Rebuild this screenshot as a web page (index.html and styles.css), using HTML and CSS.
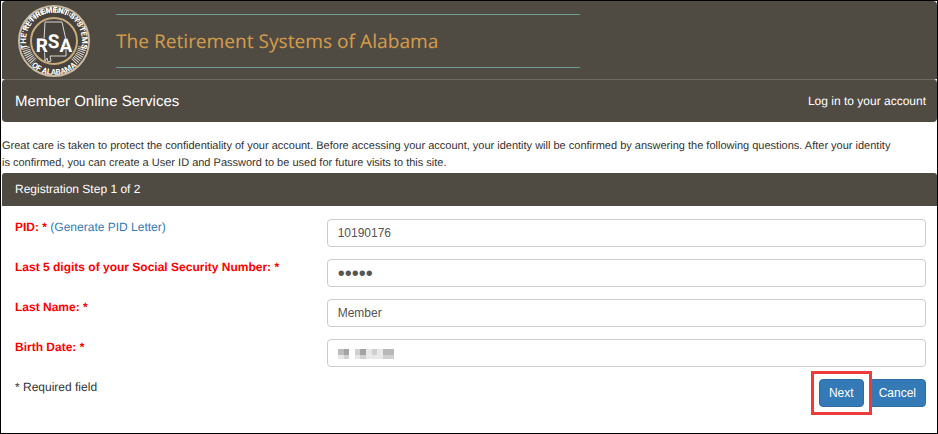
FILE: index.html
```html
<!DOCTYPE html>
<html lang="en">
<head>
  <meta charset="UTF-8">
  <title>Member Online Services</title>
  <link rel="stylesheet" href="styles.css">
</head>
<body>
  <header class="banner">
    <svg class="seal" viewBox="0 0 74 74" role="img" aria-label="RSA seal">
      <defs>
        <path id="arcTop" d="M 11 47 A 28 28 0 1 1 63 47"/>
        <path id="arcBottom" d="M 5 46 A 33 33 0 0 0 69 46"/>
      </defs>
      <circle cx="37" cy="37" r="35" fill="#47433c" stroke="#cbb9a0" stroke-width="2"/>
      <circle cx="37" cy="37" r="29" fill="none" stroke="#dedbd4" stroke-width="8" stroke-dasharray="1 1" pathLength="180"/>
      <path d="M 8 42 A 29 29 0 1 1 66 42" fill="none" stroke="#47433c" stroke-width="9"/>
      <path d="M 17 58 A 29 29 0 0 0 57 58" fill="none" stroke="#47433c" stroke-width="9"/>
      <circle cx="37" cy="37" r="23" fill="#47433c" stroke="#c8ab7c" stroke-width="2"/>
      <path d="M28 18 H45 L49 36 V52 H33 L34 57 L31 58 L30 54 L28 57 L27 36 Z" fill="none" stroke="#d9d6d0" stroke-width="1"/>
      <g class="seal-text">
        <text><textPath href="#arcTop" startOffset="50%">THE RETIREMENT SYSTEMS</textPath></text>
        <text><textPath href="#arcBottom" startOffset="50%">OF ALABAMA</textPath></text>
      </g>
      <text class="seal-initials" x="37" y="48">R<tspan dy="-4">S</tspan><tspan dy="4">A</tspan></text>
    </svg>
    <div class="banner-title">The Retirement Systems of Alabama</div>
  </header>

  <nav class="navbar">
    <span class="navbar-brand">Member Online Services</span>
    <a class="navbar-link" href="#">Log in to your account</a>
  </nav>

  <p class="intro">
    Great care is taken to protect the confidentiality of your account. Before accessing your account, your identity will be confirmed by answering the following questions. After your identity<br>
    is confirmed, you can create a User ID and Password to be used for future visits to this site.
  </p>

  <main class="panel">
    <h1 class="panel-heading">Registration Step 1 of 2</h1>
    <form class="panel-body">
      <div class="form-group">
        <div class="form-label">
          <label for="pid">PID: *</label>
          <a href="#">(Generate PID Letter)</a>
        </div>
        <input class="form-control" type="text" id="pid" value="10190176">
      </div>
      <div class="form-group">
        <label class="form-label" for="ssn">Last 5 digits of your Social Security Number: *</label>
        <input class="form-control" type="password" id="ssn" value="12345">
      </div>
      <div class="form-group">
        <label class="form-label" for="lastName">Last Name: *</label>
        <input class="form-control" type="text" id="lastName" value="Member">
      </div>
      <div class="form-group">
        <label class="form-label" for="birthDate">Birth Date: *</label>
        <div class="masked">
          <input class="form-control" type="text" id="birthDate">
          <svg class="mosaic" viewBox="0 0 56 10" shape-rendering="crispEdges" aria-hidden="true">
            <path fill="#bdbdbd" d="M0 0h6v6h-6z"/>
            <path fill="#a3a3a3" d="M6 0h5v6h-5z M22 0h6v6h-6z"/>
            <path fill="#d0d0d0" d="M17 0h5v6h-5z M34 0h5v6h-5z M6 6h5v4h-5z M22 6h6v4h-6z M45 6h11v4h-11z"/>
            <path fill="#b8b8b8" d="M45 0h11v6h-11z"/>
            <path fill="#e8e8e8" d="M28 0h6v6h-6z M39 0h6v6h-6z M0 6h6v4h-6z M17 6h5v4h-5z M28 6h17v4h-17z"/>
          </svg>
        </div>
      </div>
      <div class="form-footer">
        <span>* Required field</span>
        <div class="buttons">
          <button class="btn btn-next" type="submit">Next</button>
          <button class="btn" type="button">Cancel</button>
        </div>
      </div>
    </form>
  </main>
</body>
</html>
```

FILE: styles.css
```css
* {
  box-sizing: border-box;
}

body {
  margin: 0;
  min-height: 100vh;
  padding-left: 1px;
  border: 1px solid #000;
  background-color: #fff;
  color: #333;
  font-family: "Liberation Sans", Arial, sans-serif;
  font-size: 12px;
  line-height: 17px;
  text-rendering: geometricPrecision;
}

a {
  color: #337ab7;
  text-decoration: none;
}

.banner {
  display: flex;
  align-items: center;
  gap: 25px;
  height: 78px;
  padding: 2px 0 0 15px;
  border-radius: 4px 4px 0 0;
  background-color: #4f4a42;
}

.seal {
  width: 74px;
  height: 74px;
}

.seal-text {
  fill: #fff;
  font-family: Roboto, Arial, sans-serif;
  font-size: 8px;
  font-weight: bold;
  text-anchor: middle;
}

.seal-initials {
  fill: #fff;
  stroke: #47433c;
  stroke-width: 1px;
  paint-order: stroke;
  font-family: Roboto, Arial, sans-serif;
  font-size: 19px;
  font-weight: bold;
  text-anchor: middle;
}

.banner-title {
  width: 464px;
  border-top: 1px solid #6f9a90;
  border-bottom: 1px solid #6f9a90;
  color: #d09a4c;
  font-family: "Noto Sans", sans-serif;
  font-size: 19px;
  line-height: 52px;
}

.navbar {
  display: flex;
  align-items: center;
  justify-content: space-between;
  height: 43px;
  padding: 0 11px 0 13px;
  border-top: 1px solid #6e6861;
  border-radius: 4px;
  background-color: #4f4a42;
  color: #fff;
}

.navbar-brand {
  font-size: 15px;
}

.navbar-link {
  color: #fff;
}

.intro {
  margin: 16px 0 1px;
  font-size: 11px;
}

.panel-heading {
  margin: 0;
  padding: 8px 13px;
  border-radius: 3px 3px 0 0;
  background-color: #4f4a42;
  color: #fff;
  font-size: 12px;
  font-weight: normal;
}

.panel-body {
  padding: 13px 11px 13px 13px;
}

.form-group {
  display: grid;
  grid-template-columns: 1fr 2fr;
  column-gap: 12px;
  margin-bottom: 12px;
}

.form-label {
  color: #f00;
  font-weight: bold;
}

.form-label a {
  font-weight: normal;
}

.form-control {
  width: 100%;
  height: 28px;
  padding: 4px 10px;
  border: 1px solid #ccc;
  border-radius: 4px;
  background-color: #fff;
  color: #555;
  font: inherit;
}

.form-control[type="password"] {
  font-size: 20px;
}

.masked {
  position: relative;
}

.mosaic {
  position: absolute;
  top: 10px;
  left: 11px;
  width: 56px;
  height: 10px;
}

.form-footer {
  display: flex;
  justify-content: space-between;
}

.buttons {
  display: flex;
  gap: 5px;
}

.btn {
  height: 28px;
  padding: 0 9px;
  border: 1px solid #2e6da4;
  border-radius: 4px;
  background-color: #337ab7;
  color: #fff;
  font: inherit;
  cursor: pointer;
}

/* red marker round the next step */
.btn-next {
  position: relative;
}

.btn-next::after {
  content: "";
  position: absolute;
  inset: -9px;
  border: 3px solid #ee3b3b;
}
```
